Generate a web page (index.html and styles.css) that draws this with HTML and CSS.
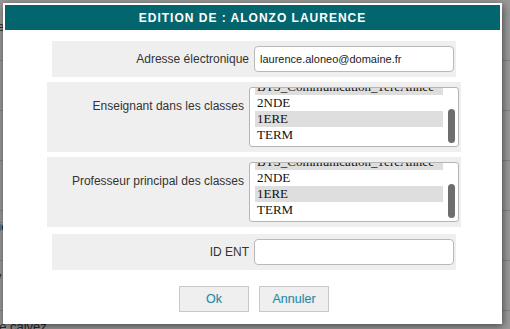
FILE: index.html
```html
<!DOCTYPE html>
<html lang="fr">
<head>
  <meta charset="UTF-8">
  <meta name="viewport" content="width=device-width, initial-scale=1.0">
  <title>Edition de : Alonzo Laurence</title>
  <link rel="stylesheet" href="styles.css">
</head>
<body>
  <div class="page">
    <div class="page-row"><span class="cut-a">Professeur de classe</span></div>
    <div class="page-row"><span class="cut-b">Martin Bono</span></div>
    <div class="page-row"><span class="cut-c">Dupont Jacob</span></div>
    <div class="page-row"><span class="cut-d">Dubois Alain L</span></div>
    <div class="page-row"><span class="cut-e">Durand Lucie</span></div>
    <div class="page-row"><span class="cut-f">Lefebvre Tony</span></div>
    <div class="page-row"><span class="cut-g">Anne calvez</span></div>
  </div>

  <div class="dialog">
    <h1 class="dialog-title">EDITION DE : ALONZO LAURENCE</h1>
    <form class="dialog-body">
      <div class="field">
        <label>Adresse électronique</label>
        <input type="text" value="laurence.aloneo@domaine.fr">
      </div>

      <div class="field field-list">
        <label>Enseignant dans les classes</label>
        <div class="listbox">
          <ul>
            <li class="selected">BTS_Communication_1ereAnnee</li>
            <li>2NDE</li>
            <li class="selected">1ERE</li>
            <li>TERM</li>
          </ul>
          <span class="thumb"></span>
        </div>
      </div>

      <div class="field field-list">
        <label>Professeur principal des classes</label>
        <div class="listbox">
          <ul>
            <li class="selected">BTS_Communication_1ereAnnee</li>
            <li>2NDE</li>
            <li class="selected">1ERE</li>
            <li>TERM</li>
          </ul>
          <span class="thumb"></span>
        </div>
      </div>

      <div class="field field-last">
        <label>ID ENT</label>
        <input type="text" value="">
      </div>

      <div class="actions">
        <button type="button">Ok</button>
        <button type="button">Annuler</button>
      </div>
    </form>
  </div>
</body>
</html>
```

FILE: styles.css
```css
body {
  margin: 0;
  font-family: 'Liberation Sans', Arial, sans-serif;
  background-color: #9a9a9a;
  overflow: hidden;
}

/* page derriere la fenetre */
.page {
  height: 329px;
  padding-top: 11px;
  box-sizing: border-box;
  overflow: hidden;
}

.page-row {
  height: 50px;
  box-sizing: border-box;
  border-bottom: 1px solid #858585;
  padding-top: 8px;
  font-size: 13px;
  line-height: 16px;
  color: #2a2a2a;
  white-space: nowrap;
}

.page-row span {
  display: inline-block;
}

.cut-a { margin-left: -117px; }
.cut-b { margin-left: -70px; }
.cut-c { margin-left: -80px; }
.cut-d { margin-left: -85px; }
.cut-e { margin-left: -69px; }
.cut-f { margin-left: -80px; }
.cut-g { margin-left: -24px; }

/* fenetre modale */
.dialog {
  position: absolute;
  left: 3px;
  top: 3px;
  width: 499px;
  height: 321px;
  box-sizing: border-box;
  padding: 2px;
  background: white;
  box-shadow: 1px 2px 8px rgba(0, 0, 0, 0.55);
}

.dialog-title {
  margin: 0;
  height: 25px;
  line-height: 26px;
  background-color: #03666f;
  color: white;
  text-align: center;
  font-size: 12px;
  font-weight: bold;
  letter-spacing: 1px;
}

.dialog-body {
  margin: 0;
  padding: 11px 0 0 3px;
  display: flex;
  flex-direction: column;
  align-items: center;
  gap: 5px;
}

.field {
  width: 404px;
  box-sizing: border-box;
  display: grid;
  grid-template-columns: 197px 200px;
  column-gap: 5px;
  align-items: center;
  padding: 5px 2px 5px 0;
  background-color: #efefef;
}

.field label {
  text-align: right;
  font-size: 12px;
  color: #333;
}

.field input {
  height: 26px;
  box-sizing: border-box;
  margin: 0;
  padding: 0 5px;
  border: 1px solid #b9b9b9;
  border-radius: 4px;
  font-family: 'Liberation Sans', Arial, sans-serif;
  font-size: 11px;
  color: #222;
  background: white;
}

.field-last {
  margin-top: 2px;
}

.field-list {
  width: 414px;
  grid-template-columns: 197px 210px;
  align-items: start;
}

.field-list label {
  padding-top: 11px;
  line-height: 16px;
}

.listbox {
  position: relative;
  height: 60px;
  box-sizing: border-box;
  border: 1px solid #b5b5b5;
  border-radius: 3px;
  background: white;
  overflow: hidden;
}

.listbox ul {
  list-style: none;
  margin: -9px 15px 0 5px;
  padding: 0;
}

.listbox li {
  height: 16px;
  line-height: 16px;
  padding-left: 2px;
  font-family: 'Liberation Serif', 'Times New Roman', serif;
  font-size: 13px;
  color: #111;
  white-space: nowrap;
  overflow: hidden;
}

.listbox li.selected {
  background-color: #dedede;
}

.thumb {
  position: absolute;
  right: 3px;
  top: 21px;
  width: 7px;
  height: 34px;
  border-radius: 4px;
  background-color: #6e6e6e;
}

.actions {
  display: flex;
  gap: 10px;
  margin-top: 11px;
}

.actions button {
  width: 70px;
  height: 26px;
  margin: 0;
  border: 1px solid #c8c8c8;
  background-color: #efefef;
  color: #2a8aa6;
  font-family: 'Liberation Sans', Arial, sans-serif;
  font-size: 12.5px;
  text-shadow: 0 0 1px rgba(42, 138, 166, 0.25);
}
```
